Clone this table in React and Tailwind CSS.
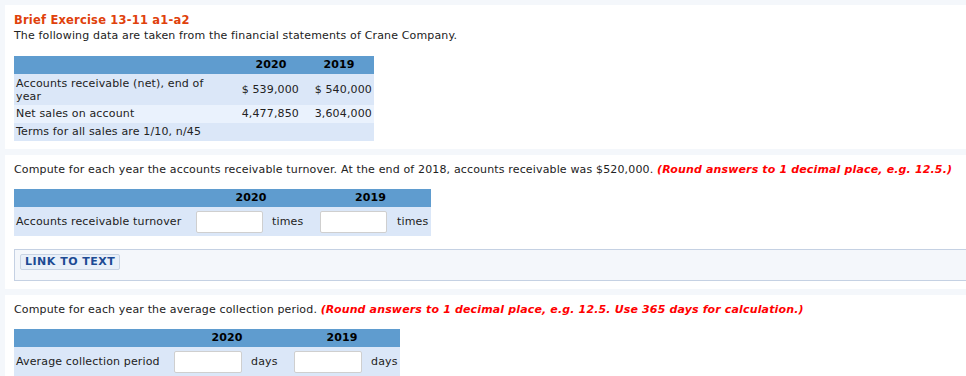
export default function App() {
  const font = { fontFamily: '"DejaVu Sans", Verdana, sans-serif' };
  return (
    <div className="w-[966px] h-[376px] overflow-hidden bg-[#f4f7fb] pt-[5px] pl-[5px] text-[11px] leading-[14px] tracking-[0.15px] text-[#222]" style={font}>
      {/* Panel 1 */}
      <div className="bg-white pl-[9px] pt-[7px] h-[144px]">
        <div className="font-bold text-[#e0410b] text-[11.5px] leading-[16px] tracking-[0.2px]">Brief Exercise 13-11 a1-a2</div>
        <div className="mt-[1px]">The following data are taken from the financial statements of Crane Company.</div>
        <table className="mt-[13px] border-collapse table-fixed w-[360px]">
          <colgroup>
            <col className="w-[224px]" />
            <col className="w-[66px]" />
            <col className="w-[70px]" />
          </colgroup>
          <thead>
            <tr className="bg-[#5f9ccf] h-[18px]">
              <th></th>
              <th className="text-center font-bold text-black">2020</th>
              <th className="text-center font-bold text-black">2019</th>
            </tr>
          </thead>
          <tbody>
            <tr className="bg-[#dbe7f8] h-[31px]">
              <td className="px-[2px] align-middle leading-[13px]">Accounts receivable (net), end of<br />year</td>
              <td className="text-right pr-[5px] whitespace-nowrap">$ 539,000</td>
              <td className="text-right pr-[2px] whitespace-nowrap">$ 540,000</td>
            </tr>
            <tr className="bg-[#eaf2fd] h-[18px]">
              <td className="px-[2px]">Net sales on account</td>
              <td className="text-right pr-[5px]">4,477,850</td>
              <td className="text-right pr-[2px]">3,604,000</td>
            </tr>
            <tr className="bg-[#dbe7f8] h-[18px]">
              <td className="px-[2px]">Terms for all sales are 1/10, n/45</td>
              <td></td>
              <td></td>
            </tr>
          </tbody>
        </table>
      </div>

      {/* Panel 2 */}
      <div className="bg-white mt-[6px] pl-[9px] pt-[8px] h-[134px] overflow-hidden">
        <div>
          Compute for each year the accounts receivable turnover. At the end of 2018, accounts receivable was $520,000.{' '}
          <span className="font-bold italic text-[#ff0000]">(Round answers to 1 decimal place, e.g. 12.5.)</span>
        </div>
        <table className="mt-[12px] border-collapse table-fixed w-[417px]">
          <colgroup>
            <col className="w-[178px]" />
            <col className="w-[75px]" />
            <col className="w-[43px]" />
            <col className="w-[82px]" />
            <col className="w-[39px]" />
          </colgroup>
          <thead>
            <tr className="bg-[#5f9ccf] h-[18px]">
              <th></th>
              <th colSpan={2} className="text-center font-bold text-black">2020</th>
              <th colSpan={2} className="text-center font-bold text-black">2019</th>
            </tr>
          </thead>
          <tbody>
            <tr className="bg-[#dbe7f8] h-[29px]">
              <td className="px-[2px] whitespace-nowrap">Accounts receivable turnover</td>
              <td className="pl-[4px]">
                <input className="block w-[67px] h-[22px] bg-white border border-[#cfcfcf] rounded-[2px]" />
              </td>
              <td className="pl-[5px]">times</td>
              <td className="pl-[10px]">
                <input className="block w-[67px] h-[22px] bg-white border border-[#cfcfcf] rounded-[2px]" />
              </td>
              <td className="pl-[5px]">times</td>
            </tr>
          </tbody>
        </table>
        <div className="mt-[13px] mr-[-10px] h-[32px] bg-[#f4f7fb] border border-[#c5d1e3] pl-[5px] pt-[4px]">
          <button className="block h-[16px] px-[4px] bg-[#e9f0f9] border border-[#c9d4e3] rounded-[2px] text-[#1d4b94] font-bold text-[11px] leading-[14px] tracking-[0.5px]" style={font}>
            LINK TO TEXT
          </button>
        </div>
      </div>

      {/* Panel 3 */}
      <div className="bg-white mt-[6px] pl-[9px] pt-[8px] h-[100px]">
        <div>
          Compute for each year the average collection period.{' '}
          <span className="font-bold italic text-[#ff0000]">(Round answers to 1 decimal place, e.g. 12.5. Use 365 days for calculation.)</span>
        </div>
        <table className="mt-[12px] border-collapse table-fixed w-[386px]">
          <colgroup>
            <col className="w-[156px]" />
            <col className="w-[76px]" />
            <col className="w-[38px]" />
            <col className="w-[82px]" />
            <col className="w-[34px]" />
          </colgroup>
          <thead>
            <tr className="bg-[#5f9ccf] h-[18px]">
              <th></th>
              <th colSpan={2} className="text-center font-bold text-black">2020</th>
              <th colSpan={2} className="text-center font-bold text-black">2019</th>
            </tr>
          </thead>
          <tbody>
            <tr className="bg-[#dbe7f8] h-[29px]">
              <td className="px-[2px] whitespace-nowrap">Average collection period</td>
              <td className="pl-[4px]">
                <input className="block w-[68px] h-[22px] bg-white border border-[#cfcfcf] rounded-[2px]" />
              </td>
              <td className="pl-[5px]">days</td>
              <td className="pl-[10px]">
                <input className="block w-[68px] h-[22px] bg-white border border-[#cfcfcf] rounded-[2px]" />
              </td>
              <td className="pl-[5px]">days</td>
            </tr>
          </tbody>
        </table>
      </div>
    </div>
  );
}
